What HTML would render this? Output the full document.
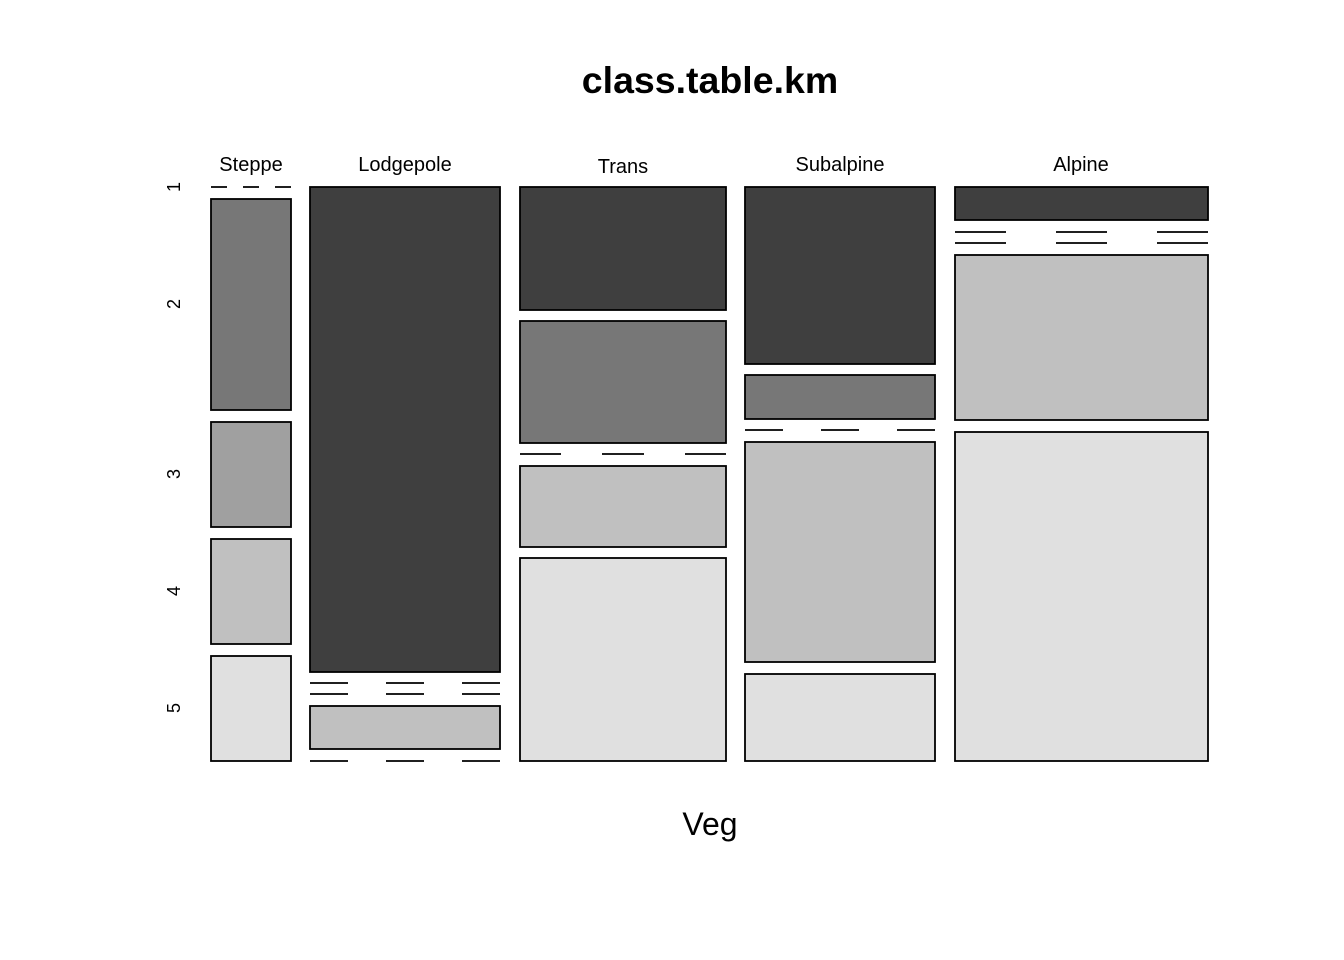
<!DOCTYPE html>
<html><head><meta charset="utf-8"><style>html,body{margin:0;padding:0;background:#fff}svg{display:block}</style></head>
<body>
<svg width="1344" height="960" viewBox="0 0 1344 960" xmlns="http://www.w3.org/2000/svg" font-family="Liberation Sans, Arial, sans-serif">
<rect width="1344" height="960" fill="#fff"/>
<text x="710" y="93" font-size="37.5" font-weight="bold" text-anchor="middle">class.table.km</text>
<g font-size="20" text-anchor="middle">
<text x="251" y="171">Steppe</text>
<text x="405" y="171">Lodgepole</text>
<text x="623" y="173">Trans</text>
<text x="840" y="171">Subalpine</text>
<text x="1081" y="171">Alpine</text>
</g>
<g font-size="18" text-anchor="middle">
<text transform="translate(180,187) rotate(-90)">1</text>
<text transform="translate(180,304) rotate(-90)">2</text>
<text transform="translate(180,474) rotate(-90)">3</text>
<text transform="translate(180,591) rotate(-90)">4</text>
<text transform="translate(180,708) rotate(-90)">5</text>
</g>
<text x="710" y="835" font-size="32" text-anchor="middle">Veg</text>
<g stroke="#000" stroke-width="1.8">
<rect x="211" y="199" width="80" height="211" fill="#777"/>
<rect x="211" y="422" width="80" height="105" fill="#a0a0a0"/>
<rect x="211" y="539" width="80" height="105" fill="#c0c0c0"/>
<rect x="211" y="656" width="80" height="105" fill="#e0e0e0"/>
<rect x="310" y="187" width="190" height="485" fill="#3f3f3f"/>
<rect x="310" y="706" width="190" height="43" fill="#c0c0c0"/>
<rect x="520" y="187" width="206" height="123" fill="#3f3f3f"/>
<rect x="520" y="321" width="206" height="122" fill="#777"/>
<rect x="520" y="466" width="206" height="81" fill="#c0c0c0"/>
<rect x="520" y="558" width="206" height="203" fill="#e0e0e0"/>
<rect x="745" y="187" width="190" height="177" fill="#3f3f3f"/>
<rect x="745" y="375" width="190" height="44" fill="#777"/>
<rect x="745" y="442" width="190" height="220" fill="#c0c0c0"/>
<rect x="745" y="674" width="190" height="87" fill="#e0e0e0"/>
<rect x="955" y="187" width="253" height="33" fill="#3f3f3f"/>
<rect x="955" y="255" width="253" height="165" fill="#c0c0c0"/>
<rect x="955" y="432" width="253" height="329" fill="#e0e0e0"/>
<path fill="none" d="
M211 187H227M243 187H259M275 187H291
M310 683H348M386 683H424M462 683H500
M310 694H348M386 694H424M462 694H500
M310 761H348M386 761H424M462 761H500
M520 454H561M602 454H644M685 454H726
M745 430H783M821 430H859M897 430H935
M955 232H1006M1056 232H1107M1157 232H1208
M955 243H1006M1056 243H1107M1157 243H1208"/>
</g>
</svg>
</body></html>
